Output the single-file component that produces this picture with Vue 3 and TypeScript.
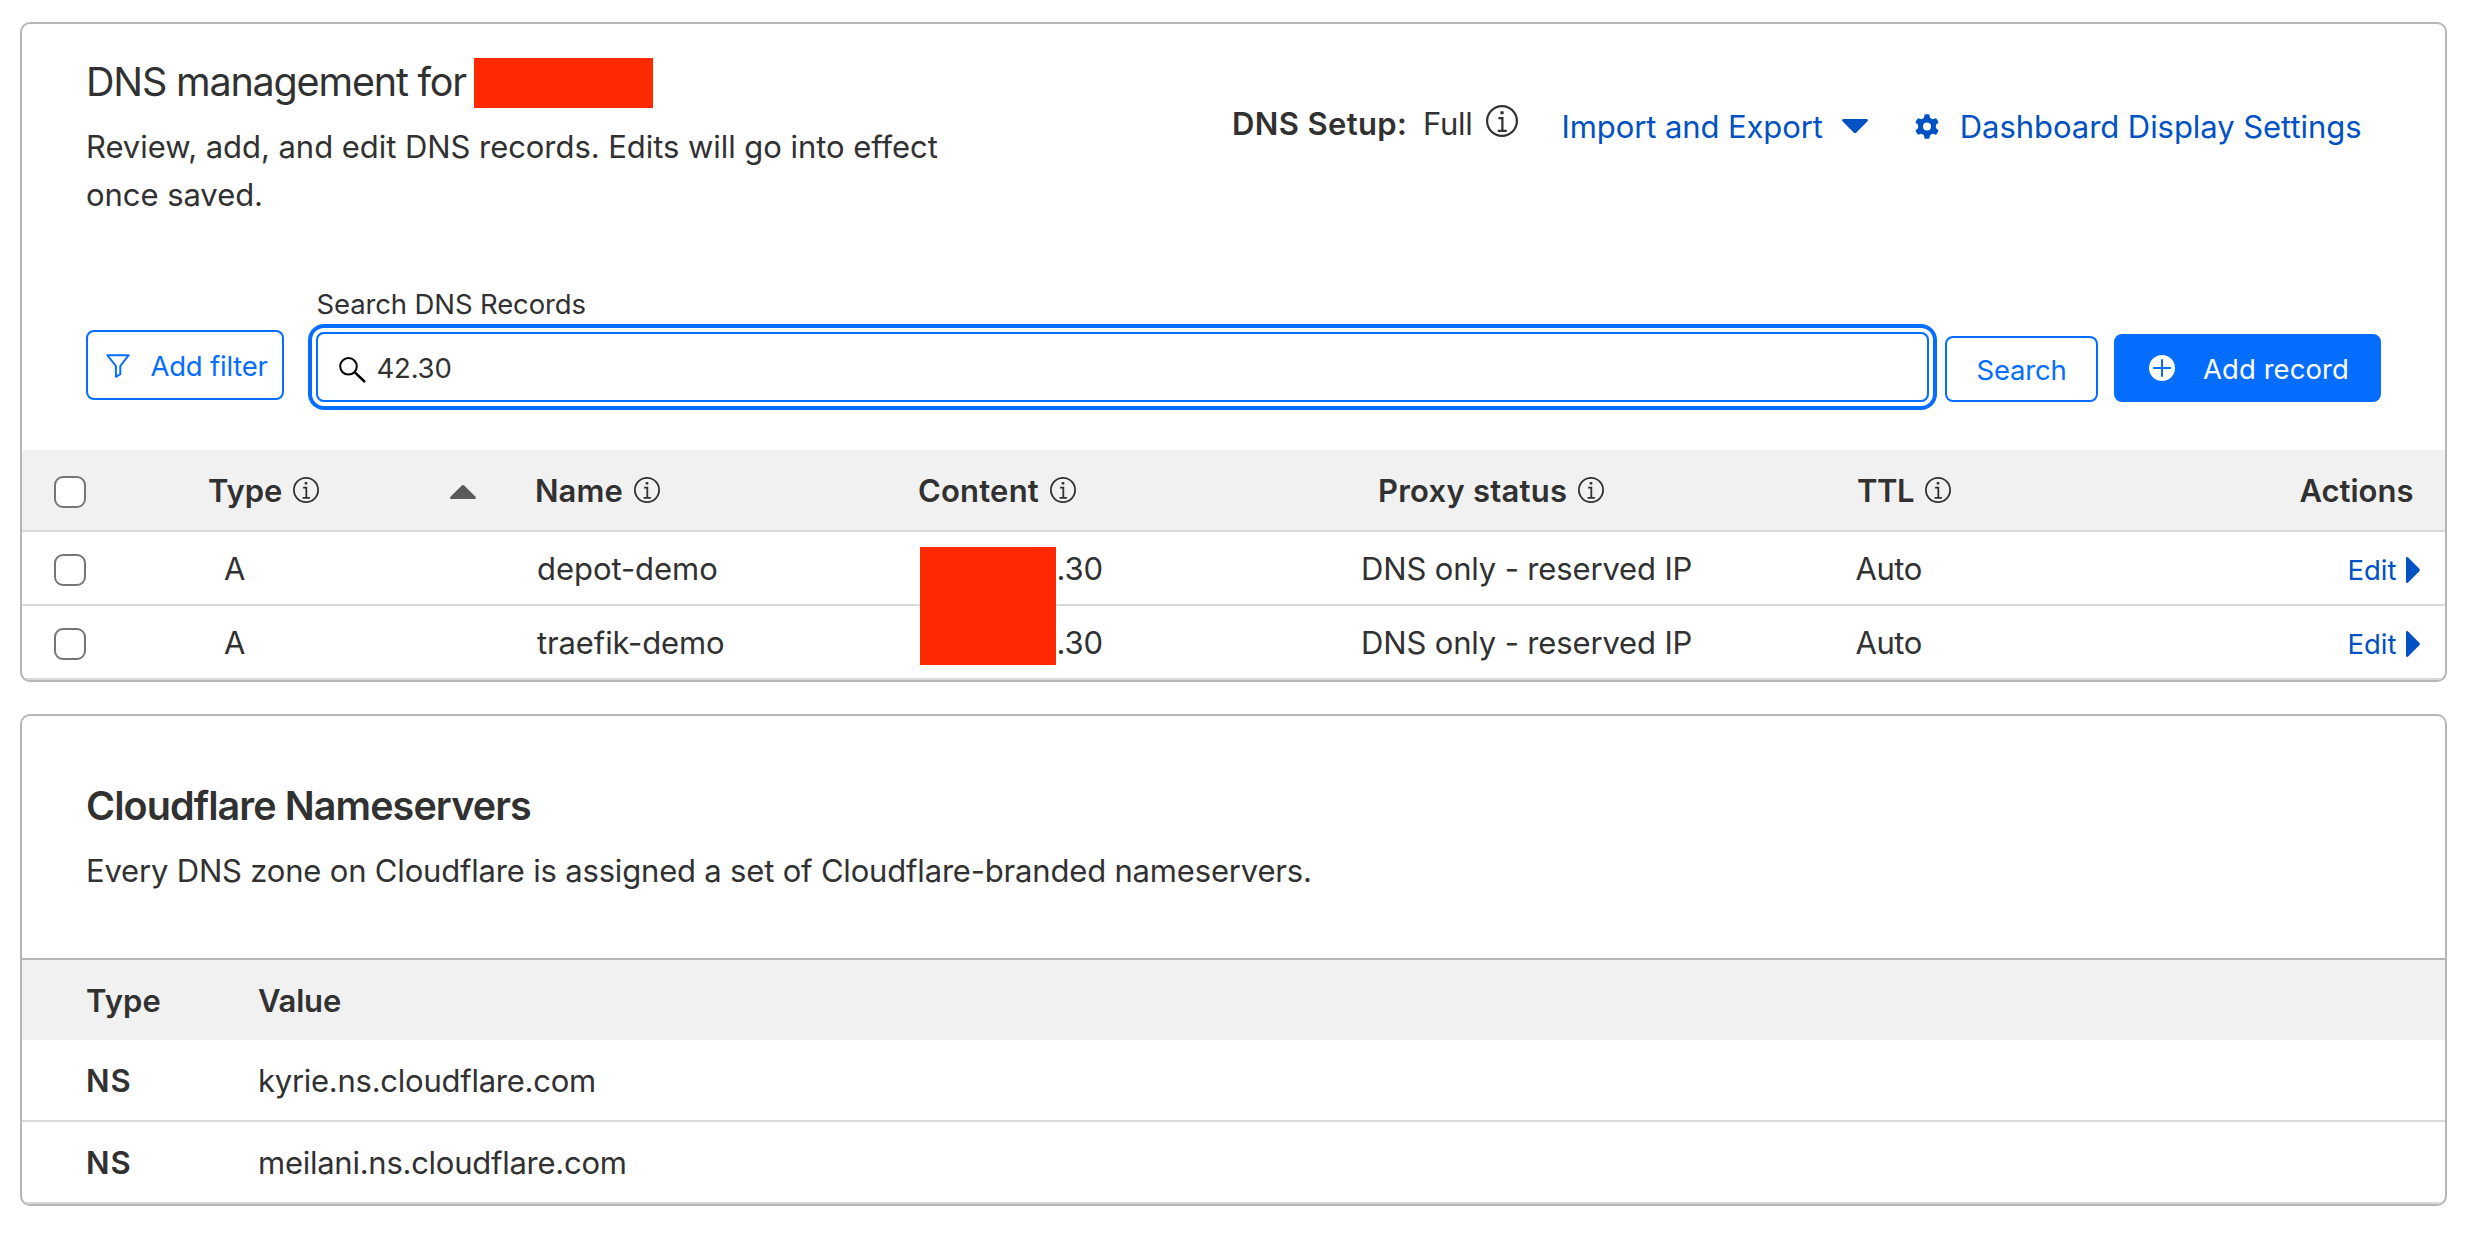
<script setup lang="ts">
interface DnsRecord {
  type: string
  name: string
  content: string
  proxy: string
  ttl: string
  nameSpacing: number
}

const records: DnsRecord[] = [
  { type: 'A', name: 'depot-demo', content: '.30', proxy: 'DNS only - reserved IP', ttl: 'Auto', nameSpacing: -0.05 },
  { type: 'A', name: 'traefik-demo', content: '.30', proxy: 'DNS only - reserved IP', ttl: 'Auto', nameSpacing: -0.12 },
]

const nameservers: { type: string; value: string }[] = [
  { type: 'NS', value: 'kyrie.ns.cloudflare.com' },
  { type: 'NS', value: 'meilani.ns.cloudflare.com' },
]
</script>

<template>
  <svg class="defs" aria-hidden="true">
    <symbol id="info" viewBox="0 0 32 32">
      <circle cx="16" cy="16" r="14.9" fill="none" stroke="currentColor" stroke-width="2.2" />
      <path d="M14.4 6.2h3.2v3h-3.2z" fill="currentColor" />
      <path d="M12.4 13.2h4v12.6M11.8 25.8h9" fill="none" stroke="currentColor" stroke-width="2.2" />
    </symbol>
  </svg>

  <main class="page">
    <section class="card">
      <header class="card-head">
        <div class="intro">
          <div class="title-row">
            <h1>DNS management for</h1>
            <span class="redacted-domain"></span>
          </div>
          <p>Review, add, and edit DNS records. Edits will go into effect<br />once saved.</p>
        </div>
        <div class="head-actions">
          <div class="setup">
            <strong>DNS Setup:</strong>
            <span class="full">Full</span>
            <svg class="info-lg"><use href="#info" /></svg>
          </div>
          <a class="link import">
            <span>Import and Export</span>
            <svg class="caret" viewBox="0 0 26 14"><path d="M1.6 0h22.8c1.4 0 2 1.4 1.1 2.3L14.4 13.4c-.8.8-2 .8-2.8 0L.5 2.3C-.4 1.4.2 0 1.6 0z" /></svg>
          </a>
          <a class="link settings">
            <svg class="gear" viewBox="0 0 24 25">
              <path fill-rule="evenodd" d="M9.6.5Q12-.2 14.4.5L15.1 4Q16.4 4.5 17.5 5.3L21 4.2Q22.8 6 23.5 8.4L20.8 10.9Q21.1 12.5 20.8 14.1L23.5 16.6Q22.8 19 21 20.8L17.5 19.7Q16.4 20.5 15.1 21L14.4 24.5Q12 25.2 9.6 24.5L8.9 21Q7.6 20.5 6.5 19.7L3 20.8Q1.2 19 .5 16.6L3.2 14.1Q2.9 12.5 3.2 10.9L.5 8.4Q1.2 6 3 4.2L6.5 5.3Q7.6 4.5 8.9 4ZM12 8.5a4 4 0 1 0 0 8a4 4 0 0 0 0-8Z" />
            </svg>
            <span>Dashboard Display Settings</span>
          </a>
        </div>
      </header>

      <div class="toolbar">
        <button class="btn filter">
          <svg viewBox="0 0 24 24"><path d="M1.3 1.2h21.4L14.3 12v8.2l-4.4 2.6V12z" fill="none" stroke="currentColor" stroke-width="2" stroke-linejoin="round" /></svg>
          <span>Add filter</span>
        </button>
        <div class="search-field">
          <label>Search DNS Records</label>
          <div class="input">
            <svg viewBox="0 0 27 26"><circle cx="9.5" cy="9.3" r="8.3" fill="none" stroke="#000" stroke-width="2" /><path d="M15.3 14.8L26 25" stroke="#000" stroke-width="2.5" /></svg>
            <span>42.30</span>
          </div>
        </div>
        <button class="btn search">Search</button>
        <button class="btn add">
          <svg viewBox="0 0 26 26"><circle cx="13" cy="13" r="13" fill="#fff" /><path d="M4.2 13h17.6M13 4.2v17.6" stroke="#056dff" stroke-width="2" /></svg>
          <span>Add record</span>
        </button>
      </div>

      <div class="row head">
        <span class="check"></span>
        <div class="cell type"><span>Type</span><svg class="info"><use href="#info" /></svg>
          <svg class="sort" viewBox="0 0 26 14"><path d="M1.6 14h22.8c1.4 0 2-1.4 1.1-2.3L14.2.6c-.7-.7-1.7-.7-2.4 0L.5 11.7C-.4 12.6.2 14 1.6 14z" /></svg>
        </div>
        <div class="cell name"><span>Name</span><svg class="info"><use href="#info" /></svg></div>
        <div class="cell content"><span>Content</span><svg class="info"><use href="#info" /></svg></div>
        <div class="cell proxy"><span>Proxy status</span><svg class="info"><use href="#info" /></svg></div>
        <div class="cell ttl"><span>TTL</span><svg class="info"><use href="#info" /></svg></div>
        <div class="cell actions">Actions</div>
      </div>
      <div class="records">
        <div v-for="r in records" :key="r.name" class="row body">
          <span class="check"></span>
          <div class="cell type">{{ r.type }}</div>
          <div class="cell name" :style="{ letterSpacing: r.nameSpacing + 'px' }">{{ r.name }}</div>
          <div class="cell content">{{ r.content }}</div>
          <div class="cell proxy">{{ r.proxy }}</div>
          <div class="cell ttl">{{ r.ttl }}</div>
          <div class="cell actions">
            <span>Edit</span>
            <svg viewBox="0 0 14 26"><path d="M0 1.4C0 .1 1.3-.4 2.1.6L13.3 11.8c.7.7.7 1.7 0 2.4L2.1 25.4C1.3 26.4 0 25.9 0 24.6z" /></svg>
          </div>
        </div>
        <span class="redacted-ip"></span>
      </div>
    </section>

    <section class="card nameservers">
      <div class="ns-intro">
        <h2>Cloudflare Nameservers</h2>
        <p>Every DNS zone on Cloudflare is assigned a set of Cloudflare-branded nameservers.</p>
      </div>
      <div class="ns-row ns-head">
        <span class="ns-type">Type</span>
        <span class="ns-value">Value</span>
      </div>
      <div v-for="n in nameservers" :key="n.value" class="ns-row">
        <strong class="ns-type">{{ n.type }}</strong>
        <span class="ns-value">{{ n.value }}</span>
      </div>
    </section>
  </main>
</template>

<style>
body {
  background: #fff;
}
</style>

<style scoped>
.defs {
  position: absolute;
  width: 0;
  height: 0;
}
.page {
  box-sizing: border-box;
  width: 2472px;
  height: 1248px;
  padding: 22px 25px 0 20px;
  overflow: hidden;
  display: flex;
  flex-direction: column;
  gap: 32px;
  font: 400 31px/37px Inter, "Liberation Sans", sans-serif;
  color: #313131;
  white-space: nowrap;
}
.page * {
  box-sizing: border-box;
}
svg {
  display: block;
  flex: none;
}
h1,
h2,
p {
  margin: 0;
}
strong {
  font-weight: 600;
}
.card {
  border: 2px solid #b6b6b6;
  border-radius: 10px;
  overflow: hidden;
}
.card-head {
  display: flex;
  justify-content: space-between;
  align-items: flex-start;
  height: 263px;
  padding: 34px 83.5px 0 64px;
}
.title-row {
  display: flex;
  height: 50px;
}
h1 {
  width: 388px;
  font-size: 39.5px;
  line-height: 48px;
  font-weight: 400;
  letter-spacing: -1.18px;
}
.redacted-domain {
  width: 179px;
  height: 50px;
  background: #ff2900;
}
.intro p {
  margin-top: 15px;
  line-height: 48px;
  letter-spacing: -0.05px;
}
.head-actions {
  display: flex;
  align-items: flex-start;
  padding-top: 47px;
}
.setup {
  display: flex;
}
.setup strong {
  width: 191px;
  letter-spacing: 0.37px;
}
.full {
  width: 63px;
  letter-spacing: -0.3px;
}
.info-lg {
  width: 32px;
  height: 32px;
}
.link {
  display: flex;
  margin-top: 3px;
  color: #0051c3;
  fill: currentColor;
}
.import {
  margin-left: 43.5px;
  letter-spacing: -0.1px;
}
.caret {
  width: 26px;
  height: 14px;
  margin: 11px 0 0 19.5px;
}
.settings {
  margin-left: 47px;
  letter-spacing: -0.055px;
}
.gear {
  width: 24px;
  height: 25px;
  margin: 6px 20.5px 0 0;
}
.toolbar {
  display: flex;
  align-items: flex-end;
  height: 163px;
  padding: 0 64px 48px;
}
.btn {
  display: flex;
  align-items: center;
  margin: 0;
  padding: 0;
  border: 2px solid #056dff;
  border-radius: 8px;
  background: #fff;
  color: #056dff;
  font: 400 27.5px/34px Inter, "Liberation Sans", sans-serif;
}
.filter {
  width: 198px;
  height: 70px;
  margin-bottom: 2px;
  padding-left: 18px;
  letter-spacing: -0.22px;
}
.filter svg {
  width: 24px;
  height: 24px;
  margin: 2px 20.5px 0 0;
}
.filter span {
  margin-top: 2px;
}
.search-field {
  width: 1613px;
  margin-left: 32px;
  font-size: 27.5px;
  line-height: 34px;
}
.search-field label {
  display: block;
  margin: 0 0 11px 0.5px;
  letter-spacing: -0.13px;
}
.input {
  display: flex;
  height: 70px;
  padding: 17px 0 0 21px;
  border: 2px solid #056dff;
  border-radius: 8px;
  box-shadow: 0 0 0 4px #fff, 0 0 0 8px #056dff;
}
.input svg {
  width: 27px;
  height: 26px;
  margin: 6px 10.5px 0 0;
}
.input span {
  letter-spacing: -0.2px;
}
.search {
  width: 153px;
  height: 66px;
  margin-left: 16px;
  padding: 2px 0 0 29.5px;
  letter-spacing: -0.2px;
}
.add {
  width: 267px;
  height: 68px;
  margin-left: 16px;
  padding-left: 33px;
  background: #056dff;
  color: #fff;
  letter-spacing: 0.065px;
}
.add svg {
  width: 26px;
  height: 26px;
  margin-right: 28px;
}
.add span {
  margin-top: 2px;
}
.row {
  display: grid;
  grid-template-columns: 186px 327px 383px 443px 495px 360px 1fr;
  border-bottom: 2px solid #d9d9d9;
}
.row .actions {
  grid-column: 6 / -1;
}
.head {
  height: 82px;
  padding-top: 22px;
  background: #f1f1f1;
  font-weight: 600;
}
.body {
  height: 74px;
  padding-top: 18px;
}
.check {
  width: 32px;
  height: 32px;
  margin: 4px 0 0 32px;
  border: 2px solid #767676;
  border-radius: 9px;
  background: #fff;
}
.row {
  grid-template-columns: 186px 327px 383px 443px 495px 400px 1fr;
}
.row .actions {
  grid-column: 7;
}
.cell {
  display: flex;
}
.info {
  width: 26px;
  height: 26px;
  margin: 5px 0 0 11px;
}
.head .type {
  letter-spacing: 0;
}
.sort {
  width: 26px;
  height: 14px;
  margin: 13px 0 0 131px;
  fill: #595959;
}
.head .name {
  letter-spacing: 0.08px;
}
.head .content {
  letter-spacing: 0.2px;
}
.head .proxy {
  padding-left: 17px;
  letter-spacing: 0.237px;
}
.head .ttl {
  padding-left: 1px;
  letter-spacing: -0.466px;
}
.head .actions {
  justify-content: flex-end;
  padding-right: 31.5px;
}
.body .type {
  padding-left: 16px;
}
.body .name {
  padding-left: 2px;
}
.body .content {
  padding-left: 138.5px;
  letter-spacing: -0.124px;
}
.body .proxy {
  letter-spacing: -0.15px;
}
.body .ttl {
  margin-left: -0.5px;
  letter-spacing: -0.45px;
}
.body .actions {
  justify-content: flex-end;
  padding: 3px 25px 0 0;
  font-size: 27.5px;
  line-height: 34px;
  color: #0051c3;
  fill: currentColor;
}
.body .actions svg {
  width: 14px;
  height: 26px;
  margin: 4px 0 0 9.5px;
}
.records {
  position: relative;
}
.redacted-ip {
  position: absolute;
  left: 898px;
  top: 15px;
  width: 136px;
  height: 118px;
  background: #ff2900;
}
.ns-intro {
  height: 244px;
  padding: 66px 64px 0;
  border-bottom: 2px solid #b6b6b6;
}
h2 {
  font-size: 39.5px;
  line-height: 48px;
  font-weight: 600;
  letter-spacing: -0.92px;
}
.ns-intro p {
  margin-top: 22px;
  letter-spacing: -0.183px;
}
.ns-row {
  display: flex;
  height: 82px;
  padding: 22px 64px 0;
  border-bottom: 2px solid #d9d9d9;
}
.ns-head {
  height: 80px;
  border-bottom: 0;
  background: #f1f1f1;
  font-weight: 600;
}
.ns-type {
  width: 172px;
}
.ns-value {
  letter-spacing: -0.26px;
}
.ns-head .ns-type {
  letter-spacing: 0.15px;
}
.ns-head .ns-value {
  letter-spacing: -0.2px;
}
strong.ns-type {
  letter-spacing: 1px;
}
</style>
